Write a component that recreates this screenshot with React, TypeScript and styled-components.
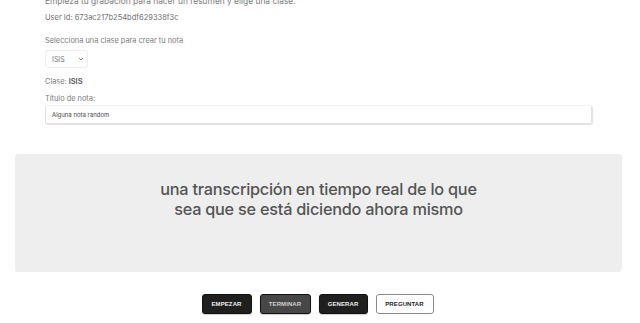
import React from 'react';
import styled, { createGlobalStyle } from 'styled-components';

const GlobalStyles = createGlobalStyle`
  * {
    margin: 0;
    padding: 0;
    box-sizing: border-box;
  }

  body {
    background: #ffffff;
    font-family: Inter, "Noto Sans", sans-serif;
    color: #777;
    overflow: hidden;
  }
`;

const Page = styled.div`
  width: 640px;
  height: 323px;
  overflow: hidden;
  display: flex;
  flex-direction: column;
`;

const Form = styled.section`
  display: flex;
  flex-direction: column;
  padding: 0 48px 0 45px;
  margin-top: -5px;
`;

const Intro = styled.p`
  font-size: 8.4px;
  line-height: 13px;
  color: #7a7a7a;
`;

const UserId = styled.p`
  font-size: 7.5px;
  line-height: 12px;
  color: #6f6f6f;
  margin-top: 4px;
`;

const Label = styled.label<{ $top?: number }>`
  font-size: 7.4px;
  line-height: 12px;
  color: #7c7c7c;
  margin-top: ${(p) => p.$top ?? 0}px;

  strong {
    color: #555;
    font-weight: 600;
  }
`;

const SelectBox = styled.div`
  width: 43px;
  height: 18px;
  margin-top: 3px;
  border: 1px solid #eeeeee;
  border-radius: 3px;
  display: flex;
  align-items: center;
  justify-content: space-between;
  padding: 0 3px 0 6px;
  font-size: 7px;
  color: #777;
`;

const TitleInput = styled.div`
  height: 19px;
  border: 1px solid #e2e2e2;
  border-top-color: #f2f2f2;
  border-radius: 2px;
  box-shadow: 1px 1px 1px rgba(0, 0, 0, 0.12);
  display: flex;
  align-items: center;
  padding: 0 6px;
  font-size: 6px;
  color: #444;
`;

const Transcript = styled.section`
  margin: 30px 18px 0 15px;
  height: 118px;
  background: #eeeeee;
  border-radius: 3px;
  display: flex;
  justify-content: center;
  padding-top: 25px;
`;

const TranscriptText = styled.p`
  width: 340px;
  text-align: center;
  font-size: 16.3px;
  line-height: 20px;
  font-weight: 500;
  color: #555555;
  letter-spacing: -0.25px;
`;

const Actions = styled.div`
  display: flex;
  justify-content: center;
  gap: 8px;
  margin-top: 22px;
  padding-right: 5px;
`;

const Button = styled.button<{ $variant: 'dark' | 'muted' | 'outline'; $w: number }>`
  width: ${(p) => p.$w}px;
  height: 20px;
  border-radius: 3px;
  font-family: "Liberation Sans", Arial, sans-serif;
  font-weight: 700;
  font-size: 6px;
  letter-spacing: 0.1px;
  cursor: pointer;
  background: ${(p) => (p.$variant === 'dark' ? '#1f1f1f' : p.$variant === 'muted' ? '#474747' : '#ffffff')};
  color: ${(p) => (p.$variant === 'outline' ? '#222' : p.$variant === 'muted' ? '#d0d0d0' : '#eeeeee')};
  border: 1px solid ${(p) => (p.$variant === 'outline' ? '#8a8a8a' : '#111')};
  box-shadow: ${(p) => (p.$variant === 'outline' ? 'none' : '0 1px 1px rgba(0,0,0,0.2)')};
`;

const Chevron = () => (
  <svg width="6" height="6" viewBox="0 0 10 10" fill="none" stroke="#666" strokeWidth="1.6">
    <path d="M2 3.5 L5 6.5 L8 3.5" />
  </svg>
);

export default function App() {
  return (
    <>
      <GlobalStyles />
      <Page>
        <Form>
          <Intro>Empieza tu grabación para hacer un resumen y elige una clase.</Intro>
          <UserId>User Id: 673ac217b254bdf629338f3c</UserId>
          <Label $top={11}>Selecciona una clase para crear tu nota</Label>
          <SelectBox>
            <span>ISIS</span>
            <Chevron />
          </SelectBox>
          <Label $top={8}>
            Clase: <strong>ISIS</strong>
          </Label>
          <Label $top={5}>Título de nota:</Label>
          <TitleInput>Alguna nota random</TitleInput>
        </Form>
        <Transcript>
          <TranscriptText>
            una transcripción en tiempo real de lo que sea que se está diciendo ahora mismo
          </TranscriptText>
        </Transcript>
        <Actions>
          <Button $variant="dark" $w={50}>EMPEZAR</Button>
          <Button $variant="muted" $w={51}>TERMINAR</Button>
          <Button $variant="dark" $w={49}>GENERAR</Button>
          <Button $variant="outline" $w={58}>PREGUNTAR</Button>
        </Actions>
      </Page>
    </>
  );
}
